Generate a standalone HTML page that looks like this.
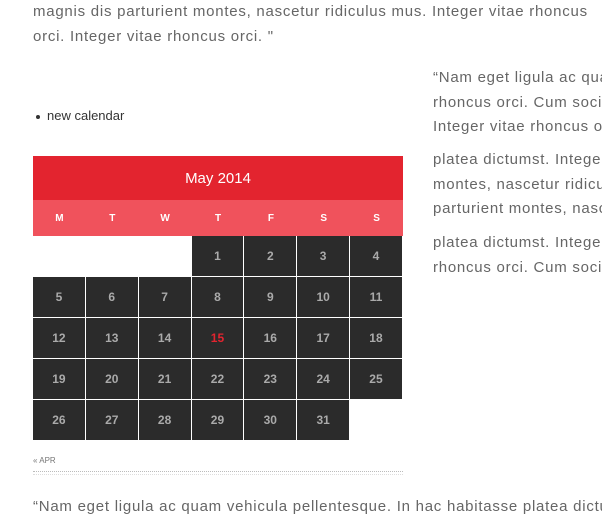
<!DOCTYPE html>
<html><head><meta charset="utf-8"><style>
html,body{margin:0;padding:0}
body{width:602px;height:522px;overflow:hidden;background:#fff;font-family:"Liberation Sans",sans-serif;color:#666;}
.w{position:relative;width:602px;height:522px;overflow:hidden}
.t{position:absolute;font-size:15px;white-space:nowrap;line-height:24.5px;letter-spacing:0.75px}
.cal{position:absolute;left:33px;top:156px;width:370px}
.hd{height:44px;background:#e3242f;color:#fff;font-size:15px;text-align:center;line-height:46px}
.dn{height:36px;background:#f0525c;display:flex}
.dn div{flex:1;color:#fff;font-size:10px;font-weight:bold;text-align:center;line-height:37px}
.row{display:flex;height:41px}
.c{width:52.857px;box-sizing:border-box;background:#2b2b2b;border-right:1px solid #fff;border-bottom:1px solid #fff;color:#aaa;font-weight:bold;font-size:12px;text-align:center;line-height:40px}
.c.e{background:#fff}
.c.r{color:#e3242f}
</style></head><body><div class="w">
<div class="t" style="left:33px;top:0px">magnis dis parturient montes, nascetur ridiculus mus. Integer vitae rhoncus<br>orci. Integer vitae rhoncus orci. "</div>
<div class="t" style="left:433px;top:66px;width:169px;overflow:hidden">“Nam eget ligula ac quam<br>rhoncus orci. Cum sociis<br>Integer vitae rhoncus orci</div>
<div class="t" style="left:433px;top:148px;width:169px;overflow:hidden">platea dictumst. Integer<br>montes, nascetur ridiculus<br>parturient montes, nascetur</div>
<div class="t" style="left:433px;top:231px;width:169px;overflow:hidden">platea dictumst. Integer<br>rhoncus orci. Cum sociis</div>
<div style="position:absolute;left:36px;top:115px;width:4px;height:4px;border-radius:50%;background:#333"></div>
<div style="position:absolute;left:47px;top:108px;font-size:13px;color:#333">new calendar</div>
<div class="cal">
<div class="hd">May 2014</div>
<div class="dn"><div>M</div><div>T</div><div>W</div><div>T</div><div>F</div><div>S</div><div>S</div></div>
<div class="row"><div class="c e"></div><div class="c e"></div><div class="c e"></div><div class="c">1</div><div class="c">2</div><div class="c">3</div><div class="c">4</div></div>
<div class="row"><div class="c">5</div><div class="c">6</div><div class="c">7</div><div class="c">8</div><div class="c">9</div><div class="c">10</div><div class="c">11</div></div>
<div class="row"><div class="c">12</div><div class="c">13</div><div class="c">14</div><div class="c r">15</div><div class="c">16</div><div class="c">17</div><div class="c">18</div></div>
<div class="row"><div class="c">19</div><div class="c">20</div><div class="c">21</div><div class="c">22</div><div class="c">23</div><div class="c">24</div><div class="c">25</div></div>
<div class="row"><div class="c">26</div><div class="c">27</div><div class="c">28</div><div class="c">29</div><div class="c">30</div><div class="c">31</div><div class="c e"></div></div>
</div>
<div style="position:absolute;left:33px;top:456px;font-size:8px;color:#777">« APR</div>
<div style="position:absolute;left:33px;top:471px;width:370px;border-top:1px dotted #bbb;height:2px;border-bottom:1px dotted #ddd"></div>
<div class="t" style="left:33px;top:495px;width:569px;overflow:hidden">“Nam eget ligula ac quam vehicula pellentesque. In hac habitasse platea dictumst.</div>
</div></body></html>
